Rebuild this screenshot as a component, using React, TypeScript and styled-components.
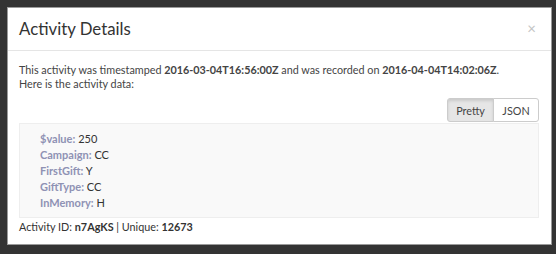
import React from "react";
import styled, { createGlobalStyle } from "styled-components";

const Global = createGlobalStyle`
  html, body { margin: 0; padding: 0; background: #333333; }
  body { font-family: Lato, "Open Sans", sans-serif; -webkit-font-smoothing: antialiased; }
  * { box-sizing: border-box; }
`;

const Backdrop = styled.div`
  width: 556px;
  height: 254px;
  padding: 7px 4px 9px 7px;
  background: #333333;
`;

const Modal = styled.div`
  width: 545px;
  height: 238px;
  background: #ffffff;
  border: 1px solid #9a9a9a;
  display: flex;
  flex-direction: column;
`;

const Header = styled.div`
  height: 43px;
  display: flex;
  align-items: center;
  justify-content: space-between;
  padding: 0 15px 1px 11px;
  border-bottom: 1px solid #e5e5e5;
`;

const Title = styled.h4`
  margin: 0;
  font-size: 16.8px;
  font-weight: 400;
  color: #333333;
`;

const Close = styled.span`
  font-size: 15px;
  color: #c4c4c4;
  line-height: 1;
`;

const Body = styled.div`
  padding: 12px 12px 0 11px;
  display: flex;
  flex-direction: column;
  font-size: 10.8px;
  color: #333333;
`;

const Intro = styled.p`
  margin: 0;
  line-height: 14px;
  color: #444;
`;

const Toolbar = styled.div`
  display: flex;
  justify-content: flex-end;
  margin-top: 7px;
`;

const Seg = styled.button<{ $active?: boolean }>`
  font-family: inherit;
  font-size: 10.8px;
  color: #444;
  height: 24px;
  width: ${(p) => (p.$active ? "47px" : "46px")};
  padding: 0;
  border: 1px solid #cccccc;
  background: ${(p) => (p.$active ? "#e6e6e6" : "#ffffff")};
  box-shadow: ${(p) => (p.$active ? "inset 0 2px 3px rgba(0,0,0,0.12)" : "none")};
  margin-left: -1px;
  border-radius: ${(p) => (p.$active ? "3px 0 0 3px" : "0 3px 3px 0")};
`;

const DataBox = styled.div`
  margin-top: 1px;
  background: #f9f9f9;
  border: 1px solid #eeeeee;
  padding: 7px 20px 6px 20px;
  height: 95px;
`;

const Line = styled.div`
  line-height: 16px;
  font-size: 11px;
  color: #333;
`;

const Key = styled.span`
  font-weight: 700;
  color: #8f92b4;
`;

const Footer = styled.div`
  margin-top: 1px;
  line-height: 15px;
  color: #333;
`;

const data: [string, string][] = [
  ["$value", "250"],
  ["Campaign", "CC"],
  ["FirstGift", "Y"],
  ["GiftType", "CC"],
  ["InMemory", "H"],
];

export default function App() {
  return (
    <>
      <Global />
      <Backdrop>
        <Modal>
          <Header>
            <Title>Activity Details</Title>
            <Close>×</Close>
          </Header>
          <Body>
            <Intro>
              This activity was timestamped <b>2016-03-04T16:56:00Z</b> and was recorded on{" "}
              <b>2016-04-04T14:02:06Z</b>.
              <br />
              Here is the activity data:
            </Intro>
            <Toolbar>
              <Seg $active>Pretty</Seg>
              <Seg>JSON</Seg>
            </Toolbar>
            <DataBox>
              {data.map(([k, v]) => (
                <Line key={k}>
                  <Key>{k}:</Key> {v}
                </Line>
              ))}
            </DataBox>
            <Footer>
              Activity ID: <b>n7AgKS</b> | Unique: <b>12673</b>
            </Footer>
          </Body>
        </Modal>
      </Backdrop>
    </>
  );
}
